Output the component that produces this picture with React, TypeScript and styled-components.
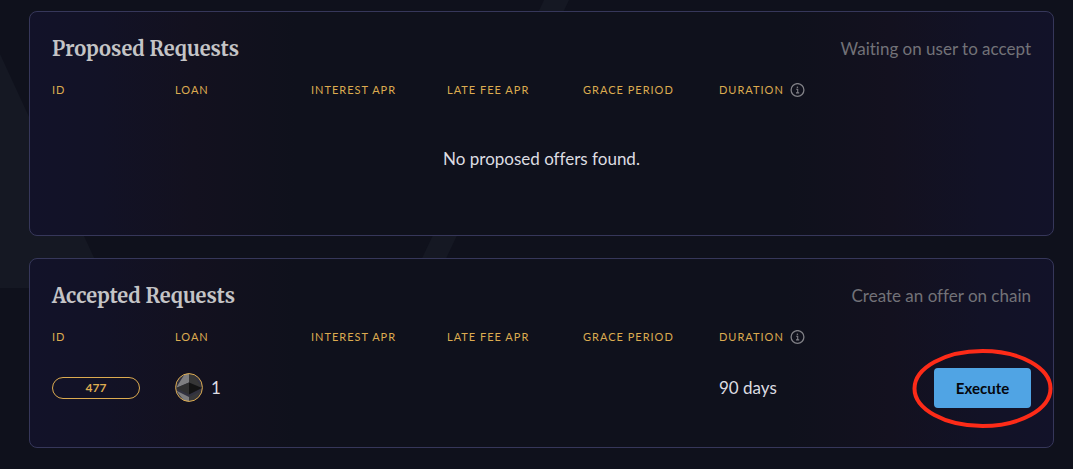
import React from 'react';
import styled, { createGlobalStyle } from 'styled-components';

const GlobalStyle = createGlobalStyle`
  *, *::before, *::after { box-sizing: border-box; }
  body {
    margin: 0;
    background: #0f111c;
    color: #dddde2;
    font-family: Lato, "Liberation Sans", sans-serif;
    font-size: 17px;
    font-variant-ligatures: none;
    line-height: 24px;
  }
`;

const Page = styled.main`
  position: relative;
  display: flex;
  flex-direction: column;
  gap: 22px;
  padding: 11px 19px 21px 29px;
`;

const Backdrop = styled.svg`
  position: absolute;
  top: 0;
  left: 0;
  z-index: -1;
`;

const Card = styled.section`
  padding: 22px;
  border: 1px solid #36375a;
  border-radius: 8px;
  background: linear-gradient(
    90deg,
    #121229 0%,
    #121226 7%,
    #13111f 16%,
    #0f111c 26%,
    #0f111c 74%,
    #13111f 84%,
    #121226 93%,
    #121229 100%
  );
`;

const CardHeader = styled.header`
  display: flex;
  align-items: center;
  justify-content: space-between;
  height: 30px;
`;

const Title = styled.h2`
  margin: 0;
  color: #c4c4c6;
  font-family: Merriweather, "DejaVu Serif Condensed", "DejaVu Serif", serif;
  font-size: 20px;
  font-weight: 700;
  line-height: 24px;
`;

const Hint = styled.p`
  margin: 0;
  color: #727278;
`;

const Table = styled.table`
  width: 100%;
  margin-top: 12px;
  border-collapse: collapse;
  table-layout: fixed;
`;

const Column = styled.col<{ $width?: number }>`
  width: ${({ $width }) => ($width ? `${$width}px` : 'auto')};
`;

const HeadCell = styled.th`
  height: 28px;
  padding: 0;
  color: #dcab50;
  font-size: 11px;
  font-weight: 400;
  line-height: 16px;
  letter-spacing: 1px;
  text-align: left;
  text-transform: uppercase;
  white-space: nowrap;
`;

const HeadLabel = styled.span`
  display: flex;
  align-items: center;
  gap: 6px;
`;

const EmptyCell = styled.td`
  height: 109px;
  padding: 0;
  text-align: center;
`;

const Cell = styled.td<{ $align?: string }>`
  height: 74px;
  padding: 0;
  text-align: ${({ $align }) => $align ?? 'left'};
`;

const Badge = styled.a`
  display: block;
  width: 88px;
  height: 22px;
  border: 1px solid #dcab50;
  border-radius: 11px;
  color: #dcab50;
  font-size: 12px;
  font-weight: 700;
  line-height: 20px;
  text-align: center;
  text-decoration: none;
`;

const Amount = styled.span`
  display: flex;
  align-items: center;
  gap: 8px;
`;

const ActionWrap = styled.span`
  position: relative;
  display: inline-block;
  vertical-align: middle;
`;

const ExecuteButton = styled.button`
  display: block;
  width: 97px;
  height: 40px;
  border: 0;
  border-radius: 4px;
  padding: 0;
  background: #50a4e4;
  color: #05070d;
  font-family: inherit;
  font-size: 15px;
  font-weight: 700;
  cursor: pointer;
`;

const Highlight = styled.svg`
  position: absolute;
  top: 50%;
  left: 50%;
  transform: translate(-50%, -50%);
  pointer-events: none;
`;

const InfoIcon = () => (
  <svg width="15" height="15" viewBox="0 0 15 15" fill="none" stroke="#808086" aria-hidden="true">
    <circle cx="7.5" cy="7" r="6.4" strokeWidth="1.3" />
    <path d="M6.2 6.3H7.7V9.7M6 9.9H9.2" strokeWidth="1.1" />
    <circle cx="7.4" cy="4.3" r="0.8" fill="#808086" stroke="none" />
  </svg>
);

const EthIcon = () => (
  <svg width="28" height="30" viewBox="0 0 28 30" role="img" aria-label="ETH">
    <defs>
      <clipPath id="coin">
        <ellipse cx="14" cy="14.5" rx="13.5" ry="14" />
      </clipPath>
    </defs>
    <g clipPath="url(#coin)">
      <rect width="28" height="30" fill="#31313f" />
      <path d="M14 -6L1 15L14 9.5Z" fill="#7e7e80" />
      <path d="M14 -6L27 15L14 9.5Z" fill="#363636" />
      <path d="M1 15L14 9.5V21.5Z" fill="#303030" />
      <path d="M27 15L14 9.5V21.5Z" fill="#131313" />
      <path d="M1 17.5L14 24V34Z" fill="#7c7c7e" />
      <path d="M27 17.5L14 24V34Z" fill="#38383a" />
    </g>
    <ellipse cx="14" cy="14.5" rx="13.4" ry="13.9" fill="none" stroke="#dcab50" />
  </svg>
);

const columns = [
  { label: 'ID', width: 123 },
  { label: 'Loan', width: 136 },
  { label: 'Interest APR', width: 136 },
  { label: 'Late fee APR', width: 136 },
  { label: 'Grace period', width: 136 },
  { label: 'Duration', width: 136, info: true },
];

interface RequestsCardProps {
  title: string;
  hint: string;
  children: React.ReactNode;
}

const RequestsCard = ({ title, hint, children }: RequestsCardProps) => (
  <Card>
    <CardHeader>
      <Title>{title}</Title>
      <Hint>{hint}</Hint>
    </CardHeader>
    <Table aria-label={title}>
      <colgroup>
        {columns.map(({ label, width }) => (
          <Column key={label} $width={width} />
        ))}
        <Column />
      </colgroup>
      <thead>
        <tr>
          {columns.map(({ label, info }) => (
            <HeadCell key={label} scope="col">
              <HeadLabel>
                {label}
                {info && <InfoIcon />}
              </HeadLabel>
            </HeadCell>
          ))}
          <td />
        </tr>
      </thead>
      <tbody>{children}</tbody>
    </Table>
  </Card>
);

export default function App() {
  return (
    <>
      <GlobalStyle />
      <Page>
        <Backdrop width="600" height="288" viewBox="0 0 600 288" fill="#151823" aria-hidden="true">
          <path d="M0 54L108 288H0Z" />
          <path d="M544 0H569L432 288H408Z" />
        </Backdrop>
        <RequestsCard title="Proposed Requests" hint="Waiting on user to accept">
          <tr>
            <EmptyCell colSpan={7}>No proposed offers found.</EmptyCell>
          </tr>
        </RequestsCard>
        <RequestsCard title="Accepted Requests" hint="Create an offer on chain">
          <tr>
            <Cell>
              <Badge href="#477">477</Badge>
            </Cell>
            <Cell>
              <Amount>
                <EthIcon />1
              </Amount>
            </Cell>
            <Cell />
            <Cell />
            <Cell />
            <Cell>90 days</Cell>
            <Cell $align="right">
              <ActionWrap>
                <ExecuteButton type="button">Execute</ExecuteButton>
                <Highlight width="142" height="82" viewBox="0 0 142 82" fill="none" aria-hidden="true">
                  <ellipse cx="70.5" cy="41.5" rx="68" ry="37.5" stroke="#fd2b18" strokeWidth="4" />
                </Highlight>
              </ActionWrap>
            </Cell>
          </tr>
        </RequestsCard>
      </Page>
    </>
  );
}
